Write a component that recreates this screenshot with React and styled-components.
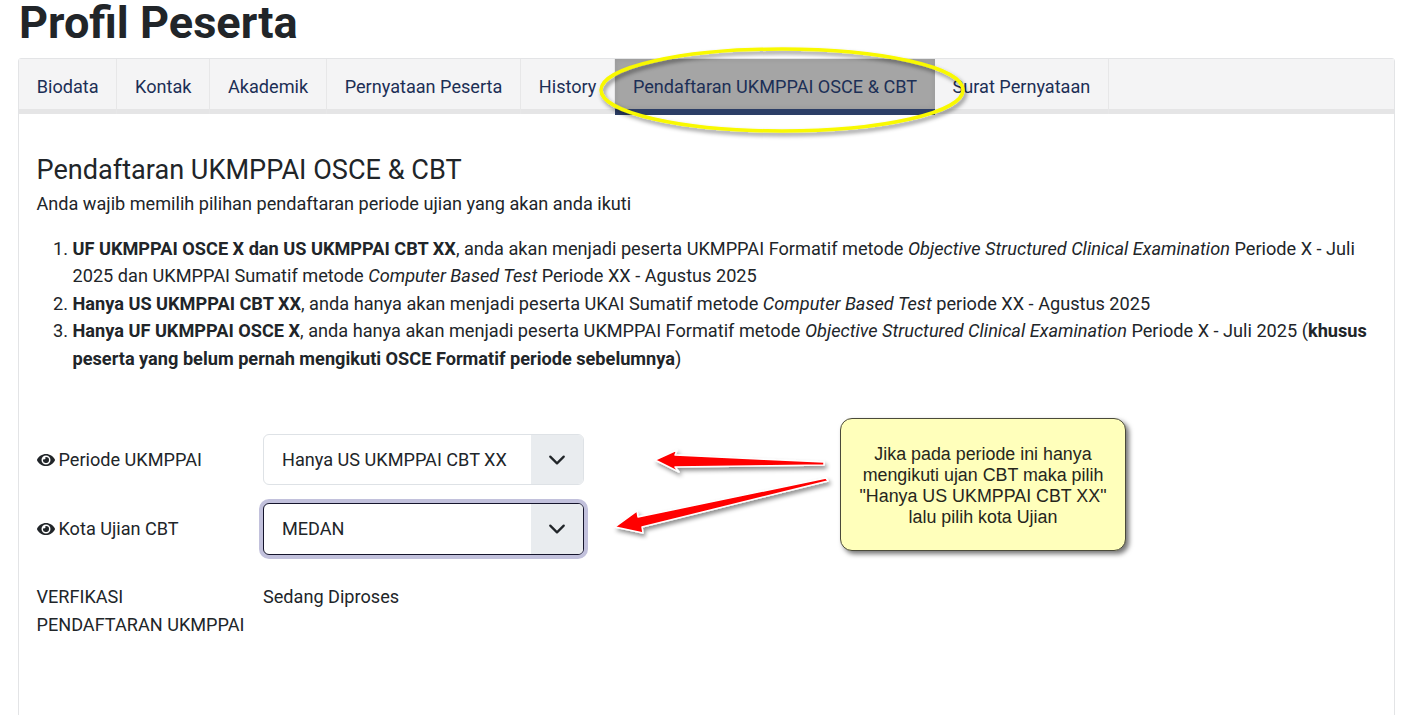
import React from "react";
import styled, { createGlobalStyle } from "styled-components";
import { FaEye } from "react-icons/fa";

const GlobalStyle = createGlobalStyle`
  html, body {
    margin: 0;
    height: 715px;
    overflow: hidden;
    background: #fff;
  }
  body {
    font-family: Roboto, "Liberation Sans", sans-serif;
    font-size: 18.13px;
    line-height: 27.5px;
    color: #212529;
  }
`;

const Page = styled.div`
  position: relative;
  height: 715px;
  overflow: hidden;
  padding: 0 32px 0 18px;
`;

const Title = styled.h1`
  margin: 0 0 11px 1px;
  height: 47px;
  font-size: 45.1px;
  line-height: 45px;
  font-weight: 700;
  color: #212529;
`;

const Card = styled.div`
  border: 1px solid #e3e4e6;
  border-radius: 3px 3px 0 0;
  height: 700px;
  background: #fff;
`;

const TabBar = styled.div`
  display: flex;
  height: 50px;
  background: #f4f4f5;
  border-bottom: 5px solid #e5e5e6;
`;

const Tab = styled.div`
  display: flex;
  align-items: center;
  height: ${(p) => (p.$active ? "56px" : "55px")};
  padding: ${(p) => (p.$active ? "5px" : "0")} 17.75px 0;
  color: #1c2f56;
  box-sizing: border-box;
  border-right: ${(p) => (p.$active ? "0" : "1px solid #e7e7e8")};
  border-bottom: ${(p) => (p.$active ? "6px solid #2c3e66" : "0")};
  background: ${(p) => (p.$active ? "#a5a5a5" : "transparent")};
  box-shadow: ${(p) => (p.$active ? "inset 0 0 6px rgba(0, 0, 0, 0.09)" : "none")};
`;

const Body = styled.div`
  padding: 41px 18px 0 17.5px;
`;

const Heading = styled.h2`
  margin: 0;
  font-size: 27.1px;
  line-height: 30px;
  font-weight: 400;
`;

const Intro = styled.p`
  margin: 5px 0 17px;
`;

const Steps = styled.ol`
  margin: 0;
  padding: 0 0 0 36px;
  font-size: 18.17px;
`;

const Form = styled.div`
  display: flex;
  flex-direction: column;
  margin-top: 62px;
`;

const Row = styled.div`
  display: flex;
  align-items: ${(p) => (p.$top ? "flex-start" : "center")};
  margin-bottom: ${(p) => p.$gap || "18px"};
`;

const Label = styled.div`
  width: 226.5px;
  flex-shrink: 0;
  display: flex;
  align-items: center;
  gap: 4px;

  svg {
    width: 18px;
    height: 18px;
  }
`;

const Stacked = styled.div`
  width: 226.5px;
  flex-shrink: 0;
`;

const SelectBox = styled.div`
  box-sizing: border-box;
  width: 321px;
  height: ${(p) => (p.$focus ? "52px" : "51px")};
  display: flex;
  align-items: stretch;
  border: 1px solid ${(p) => (p.$focus ? "#15152c" : "#dee2e6")};
  border-radius: 6px;
  overflow: hidden;
  background: #fff;
  box-shadow: ${(p) => (p.$focus ? "0 0 0 4px #c2c1dc" : "none")};
`;

const SelectValue = styled.div`
  flex: 1;
  display: flex;
  align-items: center;
  padding: 0 18px;
`;

const SelectCaret = styled.div`
  width: 52px;
  display: flex;
  align-items: center;
  justify-content: center;
  background: #e9ecef;
`;

const Overlay = styled.svg`
  position: absolute;
  left: 0;
  top: 0;
  width: 1427px;
  height: 715px;
  pointer-events: none;
`;

const Note = styled.div`
  position: absolute;
  left: 840px;
  top: 418px;
  box-sizing: border-box;
  width: 286px;
  height: 133px;
  padding-top: 3px;
  display: flex;
  align-items: center;
  justify-content: center;
  text-align: center;
  background: #ffffbb;
  border: 1px solid #4a4a3a;
  border-radius: 12px;
  box-shadow: 3px 3px 5px rgba(0, 0, 0, 0.55);
  font-family: "Liberation Sans", Arial, sans-serif;
  font-size: 17.85px;
  line-height: 21px;
  color: #26261c;
`;

const Caret = () => (
  <svg width="18" height="18" viewBox="0 0 16 16" fill="none" stroke="#212529" strokeWidth="2" strokeLinecap="round" strokeLinejoin="round">
    <path d="M2 5l6 6 6-6" />
  </svg>
);

const tabs = ["Biodata", "Kontak", "Akademik", "Pernyataan Peserta", "History", "Pendaftaran UKMPPAI OSCE & CBT", "Surat Pernyataan"];

const App = () => {
  return (
    <Page>
      <GlobalStyle />
      <Title>Profil Peserta</Title>
      <Card>
        <TabBar>
          {tabs.map((t, i) => (
            <Tab key={t} $active={i === 5}>{t}</Tab>
          ))}
        </TabBar>
        <Body>
          <Heading>Pendaftaran UKMPPAI OSCE &amp; CBT</Heading>
          <Intro>Anda wajib memilih pilihan pendaftaran periode ujian yang akan anda ikuti</Intro>
          <Steps>
            <li>
              <b>UF UKMPPAI OSCE X dan US UKMPPAI CBT XX</b>, anda akan menjadi peserta UKMPPAI Formatif metode <i>Objective Structured Clinical Examination</i> Periode X - Juli 2025 dan UKMPPAI Sumatif metode <i>Computer Based Test</i> Periode XX - Agustus 2025
            </li>
            <li>
              <b>Hanya US UKMPPAI CBT XX</b>, anda hanya akan menjadi peserta UKAI Sumatif metode <i>Computer Based Test</i> periode XX - Agustus 2025
            </li>
            <li>
              <b>Hanya UF UKMPPAI OSCE X</b>, anda hanya akan menjadi peserta UKMPPAI Formatif metode <i>Objective Structured Clinical Examination</i> Periode X - Juli 2025 (<b>khusus peserta yang belum pernah mengikuti OSCE Formatif periode sebelumnya</b>)
            </li>
          </Steps>
          <Form>
            <Row>
              <Label><FaEye />Periode UKMPPAI</Label>
              <SelectBox>
                <SelectValue>Hanya US UKMPPAI CBT XX</SelectValue>
                <SelectCaret><Caret /></SelectCaret>
              </SelectBox>
            </Row>
            <Row $gap="28px">
              <Label><FaEye />Kota Ujian CBT</Label>
              <SelectBox $focus>
                <SelectValue>MEDAN</SelectValue>
                <SelectCaret><Caret /></SelectCaret>
              </SelectBox>
            </Row>
            <Row $top>
              <Stacked>VERFIKASI<br />PENDAFTARAN UKMPPAI</Stacked>
              <div>Sedang Diproses</div>
            </Row>
          </Form>
        </Body>
      </Card>

      <Overlay viewBox="0 0 1427 715">
        <defs>
          <filter id="soft" x="-20%" y="-40%" width="140%" height="200%">
            <feDropShadow dx="2" dy="3" stdDeviation="2" floodColor="#000" floodOpacity="0.45" />
          </filter>
        </defs>
        <ellipse cx="782" cy="90" rx="181" ry="41" fill="none" stroke="#f9f900" strokeWidth="3.5" filter="url(#soft)" />
        <polygon points="655,460 677,450 675,455 824,462 824,465 675,467 679,472" fill="#ff0000" stroke="#fff" strokeWidth="1.5" strokeLinejoin="round" filter="url(#soft)" />
        <polygon points="615,527 637,511 638,517 826,478 828,481 642,527 643,533" fill="#ff0000" stroke="#fff" strokeWidth="1.5" strokeLinejoin="round" filter="url(#soft)" />
      </Overlay>

      <Note>
        <div>
          Jika pada periode ini hanya<br />
          mengikuti ujan CBT maka pilih<br />
          "Hanya US UKMPPAI CBT XX"<br />
          lalu pilih kota Ujian
        </div>
      </Note>
    </Page>
  );
};

export default App;
